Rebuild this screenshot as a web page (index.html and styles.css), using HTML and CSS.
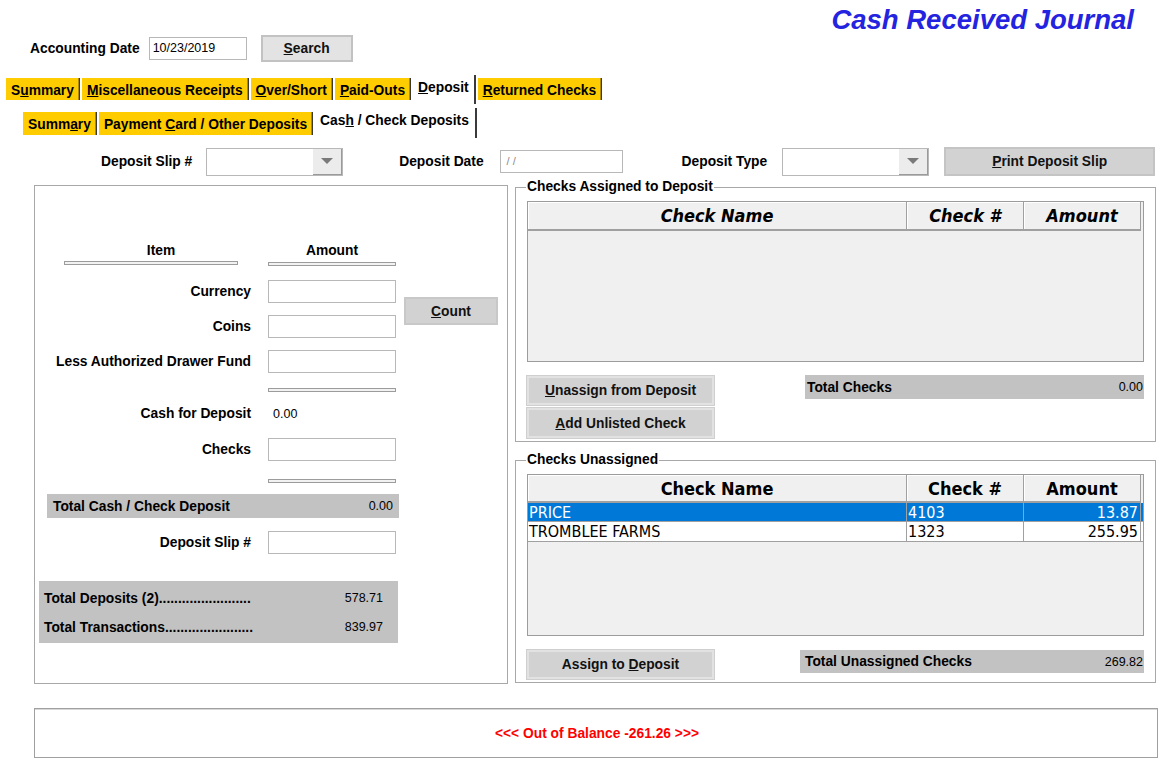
FILE: index.html
```html
<!DOCTYPE html>
<html>
<head>
<meta charset="utf-8">
<title>Cash Received Journal</title>
<link rel="stylesheet" href="styles.css">
</head>
<body>
<div class="page">
  <div class="title-row"><h1 class="title">Cash Received Journal</h1></div>

  <div class="acct-row">
    <span class="lbl">Accounting Date</span>
    <div class="field acct-field">10/23/2019</div>
    <div class="btn btn-search"><span><u>S</u>earch</span></div>
  </div>

  <div class="tabs tabs-main">
    <div class="tab"><span>S<u>u</u>mmary</span></div>
    <div class="tab"><span><u>M</u>iscellaneous Receipts</span></div>
    <div class="tab"><span><u>O</u>ver/Short</span></div>
    <div class="tab"><span><u>P</u>aid-Outs</span></div>
    <div class="tab tab-active"><span><u>D</u>eposit</span></div>
    <div class="tab"><span><u>R</u>eturned Checks</span></div>
  </div>

  <div class="tabs tabs-sub">
    <div class="tab"><span>Summ<u>a</u>ry</span></div>
    <div class="tab"><span>Payment <u>C</u>ard / Other Deposits</span></div>
    <div class="tab tab-active"><span>Cas<u>h</u> / Check Deposits</span></div>
  </div>

  <div class="slip-row">
    <span class="lbl lbl-slip">Deposit Slip #</span>
    <div class="select select-slip"><div class="arrow"><span class="tri"></span></div></div>
    <span class="lbl lbl-date">Deposit Date</span>
    <div class="field date-field">/ /</div>
    <span class="lbl lbl-type">Deposit Type</span>
    <div class="select select-type"><div class="arrow"><span class="tri"></span></div></div>
    <div class="btn btn-print"><span><u>P</u>rint Deposit Slip</span></div>
  </div>

  <div class="main">
    <section class="left-panel">
      <div class="hdr-row">
        <div class="hdr-item">
          <div class="hdr-text hdr-text-item">Item</div>
          <div class="groove"></div>
        </div>
        <div class="hdr-amount">
          <div class="hdr-text">Amount</div>
          <div class="groove groove-amt"></div>
        </div>
      </div>

      <div class="count-block">
        <div class="count-rows">
          <div class="lrow"><span class="rlabel">Currency</span><div class="field amt"></div></div>
          <div class="lrow lrow-gap"><span class="rlabel">Coins</span><div class="field amt"></div></div>
        </div>
        <div class="btn btn-count"><span><u>C</u>ount</span></div>
      </div>
      <div class="lrow lrow-gap"><span class="rlabel">Less Authorized Drawer Fund</span><div class="field amt"></div></div>

      <div class="groove-row"><div class="groove groove-amt"></div></div>

      <div class="lrow lrow-cash"><span class="rlabel">Cash for Deposit</span><span class="val">0.00</span></div>
      <div class="lrow lrow-checks"><span class="rlabel">Checks</span><div class="field amt"></div></div>

      <div class="groove-row groove-row-2"><div class="groove groove-amt"></div></div>

      <div class="total-bar total-cash"><span>Total Cash / Check Deposit</span><span class="num">0.00</span></div>

      <div class="lrow lrow-slip"><span class="rlabel">Deposit Slip #</span><div class="field amt"></div></div>

      <div class="summary-box">
        <div class="sum-row"><span>Total Deposits (2)........................</span><span class="num">578.71</span></div>
        <div class="sum-row"><span>Total Transactions.......................</span><span class="num">839.97</span></div>
      </div>
    </section>

    <div class="right-col">
      <fieldset class="group group-assigned">
        <legend>Checks Assigned to Deposit</legend>
        <div class="grid grid-assigned">
          <div class="grid-head grid-head-italic">
            <div class="gh c-name">Check Name</div>
            <div class="gh c-num">Check #</div>
            <div class="gh c-amt">Amount</div>
          </div>
        </div>
        <div class="group-foot">
          <div class="btn-stack">
            <div class="btn btn-grp"><span><u>U</u>nassign from Deposit</span></div>
            <div class="btn btn-grp btn-grp-2"><span><u>A</u>dd Unlisted Check</span></div>
          </div>
          <div class="total-bar total-checks"><span>Total Checks</span><span class="num">0.00</span></div>
        </div>
      </fieldset>

      <fieldset class="group group-unassigned">
        <legend>Checks Unassigned</legend>
        <div class="grid grid-unassigned">
          <div class="grid-head">
            <div class="gh c-name">Check Name</div>
            <div class="gh c-num">Check #</div>
            <div class="gh c-amt">Amount</div>
          </div>
          <div class="grid-row selected">
            <div class="gc c-name">PRICE</div>
            <div class="gc c-num">4103</div>
            <div class="gc c-amt">13.87</div>
          </div>
          <div class="grid-row">
            <div class="gc c-name">TROMBLEE FARMS</div>
            <div class="gc c-num">1323</div>
            <div class="gc c-amt">255.95</div>
          </div>
        </div>
        <div class="group-foot group-foot-2">
          <div class="btn btn-grp"><span>Assign to <u>D</u>eposit</span></div>
          <div class="total-bar total-unassigned"><span>Total Unassigned Checks</span><span class="num">269.82</span></div>
        </div>
      </fieldset>
    </div>
  </div>

  <div class="balance"><span class="balance-text">&lt;&lt;&lt; Out of Balance -261.26 &gt;&gt;&gt;</span></div>
</div>
</body>
</html>
```

FILE: styles.css
```css
* { box-sizing: border-box; }

html, body {
  margin: 0;
  padding: 0;
  background: #ffffff;
}

body {
  font-family: "Liberation Sans", Arial, sans-serif;
  font-size: 13.8px;
  font-weight: bold;
  color: #000;
}

.page {
  width: 1169px;
  height: 769px;
  overflow: hidden;
}

u { text-decoration: underline; text-underline-offset: 1px; }

/* title */
.title-row {
  height: 35px;
  padding-top: 5px;
  padding-right: 35px;
  display: flex;
  justify-content: flex-end;
}
.title {
  margin: 0;
  font-size: 27.5px;
  line-height: 30px;
  font-style: italic;
  font-weight: bold;
  color: #2424e0;
}

/* accounting row */
.acct-row {
  display: flex;
  align-items: center;
  height: 27px;
  padding-left: 30px;
}
.lbl { white-space: nowrap; }
.field {
  height: 23px;
  border: 1px solid #b8b8b8;
  background: #fff;
  font-weight: normal;
  font-size: 12.5px;
  line-height: 21px;
  padding-left: 3px;
}
.acct-field {
  width: 98px;
  margin-left: 9px;
}
.btn {
  display: flex;
  align-items: center;
  justify-content: center;
  white-space: nowrap;
  color: #111;
}
.btn-search {
  width: 92px;
  height: 27px;
  margin-left: 14px;
  background: #e3e3e3;
  border: 2px solid #c2c2c2;
}

/* tabs */
.tabs {
  display: flex;
  align-items: stretch;
}
.tabs-main {
  margin-top: 16px;
  height: 22px;
  padding-left: 6px;
}
.tabs-sub {
  margin-top: 12px;
  height: 23px;
  padding-left: 23px;
}
.tab {
  background: #ffcc00;
  padding: 0 5px 0 5px;
  display: flex;
  align-items: center;
  padding-top: 2px;
  white-space: nowrap;
  border-right: 1px solid #3a3a3a;
  box-shadow: inset -1px 0 0 #b08d00;
  margin-right: 2px;
}
.tab-active {
  background: #fff;
  box-shadow: none;
  padding-top: 0;
  padding-bottom: 3px;
  margin-top: -3px;
  margin-bottom: -4px;
  border-right: 2px solid #3a3a3a;
}
.tabs-main .tab-active { padding-bottom: 5px; }
.tabs-sub .tab-active { padding-bottom: 5px; margin-top: -4px; margin-bottom: -3px; padding-right: 6px; }

/* deposit slip row */
.slip-row {
  display: flex;
  align-items: center;
  height: 29px;
  margin-top: 12px;
}
.lbl-slip { margin-left: 101px; }
.select {
  height: 28px;
  border: 1px solid #b8b8b8;
  background: #fff;
  display: flex;
  justify-content: flex-end;
}
.select-slip { width: 137px; margin-left: 14px; }
.select-type { width: 147px; margin-left: 15px; }
.arrow {
  width: 29px;
  height: 100%;
  background: #ececec;
  border-right: 1px solid #9a9a9a;
  border-bottom: 1px solid #9a9a9a;
  display: flex;
  align-items: center;
  justify-content: center;
}
.tri {
  width: 0;
  height: 0;
  border-left: 6px solid transparent;
  border-right: 6px solid transparent;
  border-top: 6px solid #7a7a7a;
}
.lbl-date { margin-left: 56px; }
.date-field {
  width: 123px;
  margin-left: 16px;
  color: #8a8a8a;
  padding-left: 6px;
  font-size: 11px;
}
.lbl-type { margin-left: 59px; }
.btn-print {
  width: 211px;
  height: 29px;
  margin-left: 15px;
  background: #d2d2d2;
  border: 2px solid #c4c4c4;
}

/* main area */
.main {
  display: flex;
  align-items: flex-start;
  margin-top: 4px;
}

.left-panel {
  margin-left: 34px;
  margin-top: 5px;
  width: 474px;
  height: 499px;
  border: 1px solid #a8a8a8;
  display: flex;
  flex-direction: column;
}

.hdr-row {
  display: flex;
  margin-top: 58px;
}
.hdr-item {
  margin-left: 29px;
  width: 174px;
}
.hdr-amount {
  margin-left: 30px;
  width: 128px;
}
.hdr-text {
  height: 14px;
  line-height: 14px;
  text-align: center;
}
.hdr-text-item { padding-left: 20px; }
.groove {
  height: 4px;
  margin-top: 3px;
  border: 1px solid #9c9c9c;
  background: #f2f2f2;
}
.groove-amt { margin-top: 4px; width: 128px; }

.count-block {
  display: flex;
  align-items: center;
  margin-top: 14px;
}
.count-rows { display: flex; flex-direction: column; }
.lrow {
  display: flex;
  align-items: center;
  height: 23px;
}
.lrow-gap { margin-top: 12px; }
.rlabel {
  width: 233px;
  padding-right: 17px;
  text-align: right;
  white-space: nowrap;
}
.amt { width: 128px; }
.btn-count {
  width: 94px;
  height: 28px;
  margin-left: 8px;
  margin-top: 4px;
  background: #d2d2d2;
  border: 2px solid #c8c8c8;
}

.groove-row {
  padding-left: 233px;
  margin-top: 15px;
}
.groove-row .groove { margin-top: 0; }
.lrow-cash { margin-top: 10px; }
.val {
  font-weight: normal;
  font-size: 12.5px;
  padding-left: 5px;
}
.lrow-checks { margin-top: 13px; }
.groove-row-2 { margin-top: 18px; }

.total-bar {
  background: #c2c2c2;
  display: flex;
  justify-content: space-between;
  align-items: center;
  white-space: nowrap;
}
.num { font-weight: normal; font-size: 12.5px; }
.total-cash {
  margin-left: 12px;
  width: 352px;
  height: 24px;
  margin-top: 11px;
  padding: 0 6px;
}
.lrow-slip { margin-top: 13px; }

.summary-box {
  margin-left: 4px;
  margin-top: 27px;
  width: 359px;
  height: 62px;
  background: #c2c2c2;
  padding: 8px 15px 0 5px;
  display: flex;
  flex-direction: column;
  gap: 10px;
}
.sum-row {
  display: flex;
  justify-content: space-between;
  height: 19px;
  line-height: 19px;
}

/* right column */
.right-col {
  margin-left: 7px;
  width: 641px;
  display: flex;
  flex-direction: column;
}
.group {
  margin: 0;
  padding: 0 11px;
  border: 1px solid #a8a8a8;
  min-width: 0;
}
.group legend {
  padding: 0 1px;
  margin-left: -1px;
  line-height: 14px;
  font-size: 13.8px;
}
.group-assigned { height: 262px; }
.group-unassigned { margin-top: 11px; height: 230px; }

.grid {
  margin-top: 7px;
  width: 617px;
  height: 161px;
  border: 1px solid #9c9c9c;
  background: #f0f0f0;
}
.grid-unassigned { height: 162px; }
.grid-head {
  display: flex;
  height: 29px;
}
.grid-unassigned .grid-head { height: 28px; }
.gh {
  display: flex;
  align-items: center;
  justify-content: center;
  background: #f0f0f0;
  border-right: 1px solid #a0a0a0;
  border-bottom: 2px solid #a0a0a0;
  box-shadow: inset 1px 1px 0 #ffffff;
  font-family: "DejaVu Sans", "Liberation Sans", sans-serif;
  font-stretch: condensed;
  font-size: 18px;
  font-weight: bold;
}
.grid-head-italic .gh { font-style: italic; }
.c-name { width: 379px; }
.c-num { width: 117px; }
.c-amt { width: 117px; }

.grid-row {
  display: flex;
  height: 20px;
  background: #fff;
  border-bottom: 1px solid #a0a0a0;
}
.grid-row.selected { height: 19px; background: #0078d7; color: #fff; border-bottom: 1px solid #a0a0a0; }
.gc {
  font-family: "DejaVu Sans", "Liberation Sans", sans-serif;
  font-stretch: condensed;
  font-weight: normal;
  font-size: 16px;
  line-height: 19px;
  padding-left: 1px;
  white-space: nowrap;
  border-right: 1px solid #a0a0a0;
}
.gc.c-amt { text-align: right; padding-right: 2px; }

.group-foot {
  display: flex;
  align-items: flex-start;
  margin-top: 14px;
}
.btn-stack { display: flex; flex-direction: column; }
.btn-grp {
  width: 187px;
  height: 29px;
  background: #d2d2d2;
  border: 2px solid #e2e2e2;
  outline: 1px solid #cfcfcf;
}
.btn-grp-2 { margin-top: 3px; height: 30px; }
.total-checks {
  margin-left: 91px;
  margin-top: -1px;
  width: 339px;
  height: 24px;
  padding: 0 1px 0 2px;
}
.group-foot-2 { margin-top: 14px; }
.total-unassigned {
  margin-left: 86px;
  width: 344px;
  height: 23px;
  padding: 0 1px 0 5px;
}

/* balance */
.balance {
  margin-left: 34px;
  margin-top: 24px;
  width: 1124px;
  height: 50px;
  border: 1px solid #a0a0a0;
  box-shadow: inset 0 1px 0 #d8d8d8;
  display: flex;
  align-items: center;
  justify-content: center;
}
.balance-text {
  color: #ff0000;
  font-size: 13.8px;
  margin-left: 2px;
}
```
